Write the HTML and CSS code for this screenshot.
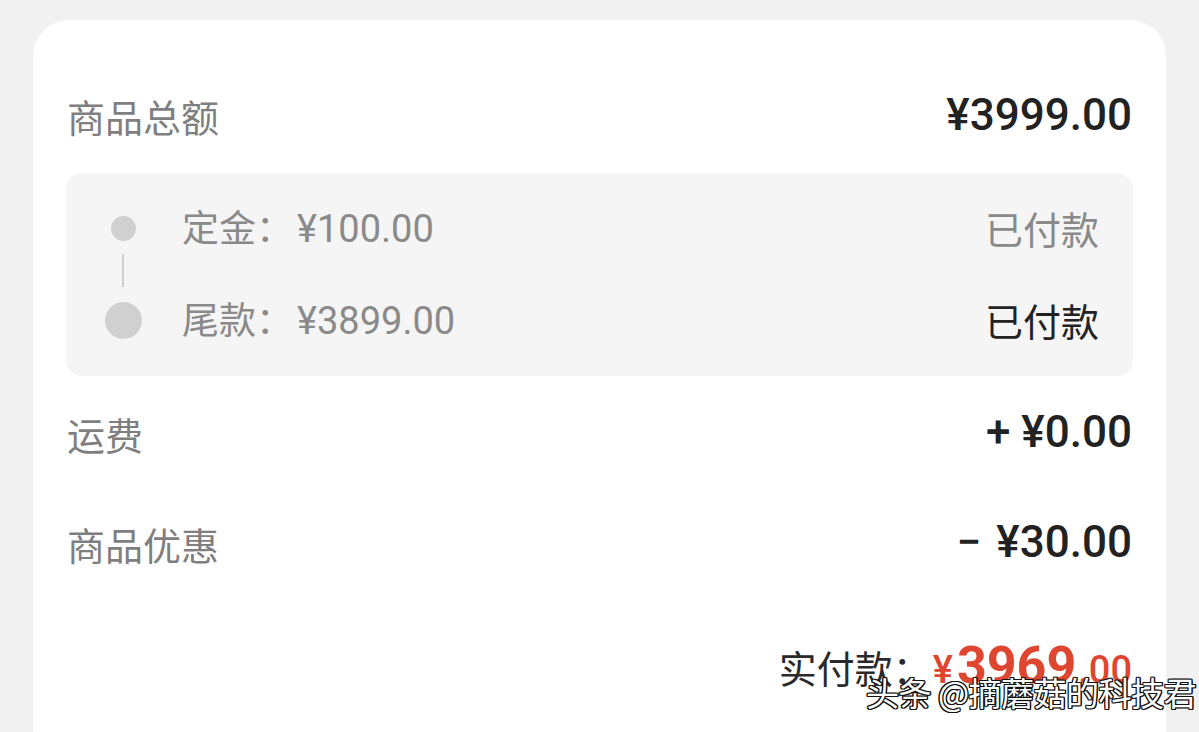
FILE: index.html
```html
<!DOCTYPE html>
<html lang="zh-CN">
<head>
<meta charset="utf-8">
<title>订单金额</title>
<link rel="stylesheet" href="styles.css">
</head>
<body>
<main class="page">
  <section class="card">
    <div class="row row-total">
      <span class="label">商品总额</span>
      <span class="value">¥3999.00</span>
    </div>

    <div class="stages">
      <span class="marker"><span class="dot dot-small"></span></span>
      <span class="stage-text">定金：<span class="amount">¥100.00</span></span>
      <span class="stage-status muted">已付款</span>

      <span class="marker connector"><span class="line"></span></span>
      <span class="spacer"></span>
      <span class="spacer"></span>

      <span class="marker"><span class="dot dot-large"></span></span>
      <span class="stage-text">尾款：<span class="amount">¥3899.00</span></span>
      <span class="stage-status dark">已付款</span>
    </div>

    <div class="row row-fee">
      <span class="label">运费</span>
      <span class="value">+ ¥0.00</span>
    </div>

    <div class="row row-discount">
      <span class="label">商品优惠</span>
      <span class="value"><span class="minus">−</span> ¥30.00</span>
    </div>

    <div class="row row-pay">
      <span class="pay-label">实付款：</span>
      <span class="pay-value"><span class="cur">¥</span><span class="int">3969</span><span class="dec">.00</span></span>
    </div>
  </section>
  <div class="watermark">头条 @摘蘑菇的科技君</div>
</main>
</body>
</html>
```

FILE: styles.css
```css
html, body {
  margin: 0;
  padding: 0;
  background: #f1f1f1;
  overflow: hidden;
}

.page {
  position: relative;
  width: 1199px;
  height: 732px;
  padding: 20px 33px 0 33px;
  box-sizing: border-box;
  font-family: "Noto Sans CJK SC", "Noto Sans", sans-serif;
}

.card {
  background: #ffffff;
  border-radius: 36px 36px 0 0;
  padding: 55px 34px 40px 34px;
  min-height: 720px;
  box-sizing: border-box;
}

.row {
  display: flex;
  justify-content: space-between;
  align-items: center;
  height: 80px;
}

.label {
  font-size: 38px;
  line-height: 1;
  color: #7f7f7f;
  padding-top: 2px;
}

.row-fee .label,
.row-discount .label {
  padding-top: 4px;
}

.value {
  font-family: Roboto, "Noto Sans CJK SC", sans-serif;
  font-weight: 500;
  font-size: 44px;
  line-height: 1;
  color: #222222;
}

.minus {
  display: inline-block;
  margin-right: 4px;
}

.row-total { margin-bottom: 18px; }

.stages {
  display: grid;
  grid-template-columns: 38px 1fr auto;
  grid-template-rows: 56px 36px 56px;
  column-gap: 40px;
  align-items: center;
  background: #f5f5f5;
  border-radius: 16px;
  padding: 27px 34px 28px 38px;
  margin: 0 -1px;
}

.marker {
  display: flex;
  justify-content: center;
  align-items: center;
  height: 100%;
}

.connector {
  align-items: flex-start;
}

.line {
  display: block;
  width: 2px;
  height: 33px;
  margin-top: -2px;
  background: #d0d0d0;
}

.dot {
  display: block;
  border-radius: 50%;
  background: #d0d0d0;
}

.dot-small { width: 25px; height: 25px; }
.dot-large { width: 37px; height: 37px; }

.stage-text {
  font-size: 37px;
  line-height: 1;
  color: #8a8a8a;
}

.amount {
  font-family: Roboto, sans-serif;
  font-size: 38px;
  margin-left: 4px;
}

.stage-status {
  font-size: 38px;
  line-height: 1;
}

.muted { color: #8a8a8a; }
.dark { color: #222222; }

.row-fee { margin-top: 16px; }
.row-discount { margin-top: 30px; }

.row-pay {
  margin-top: 58px;
  justify-content: flex-end;
  align-items: baseline;
  gap: 2px;
}

.pay-label {
  font-size: 38px;
  line-height: 1;
  color: #2a2a2a;
}

.pay-value {
  font-family: Roboto, sans-serif;
  font-weight: 500;
  color: #df4630;
  line-height: 1;
}

.pay-value .cur { font-size: 38px; margin-right: 4px; }
.pay-value .int { font-size: 52px; font-weight: 700; }
.pay-value .dec { font-size: 38px; margin-left: 2px; }

.watermark {
  position: absolute;
  left: 866px;
  top: 676px;
  font-size: 33px;
  line-height: 1;
  color: #ffffff;
  letter-spacing: -0.5px;
  text-shadow:
    -1.2px -1.2px 0 #111, 1.2px -1.2px 0 #111,
    -1.2px 1.2px 0 #111, 1.2px 1.2px 0 #111,
    0 -1.2px 0 #111, 0 1.2px 0 #111,
    -1.2px 0 0 #111, 1.2px 0 0 #111;
  white-space: nowrap;
}
```
